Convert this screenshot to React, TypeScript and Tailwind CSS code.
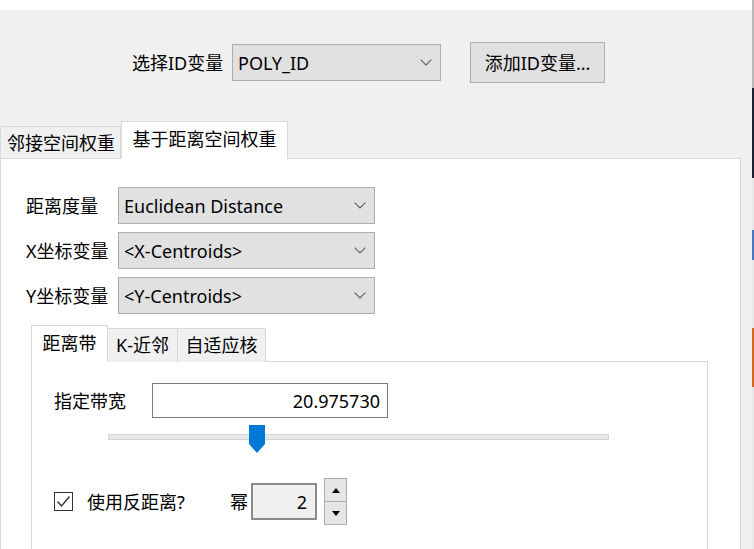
import React from "react"

const Chevron = () => (
  <svg width="12" height="7" viewBox="0 0 12 7" className="shrink-0">
    <polyline points="0.6,0.6 6,6 11.4,0.6" fill="none" stroke="#606060" strokeWidth="1.1" />
  </svg>
)

const ComboBox = ({ value, className }: { value: string; className: string }) => (
  <div
    className={`flex h-[37px] items-center justify-between border border-[#adadad] bg-[#e1e1e1] pl-[5px] pr-[8px] ${className}`}
  >
    <span className="leading-none">{value}</span>
    <Chevron />
  </div>
)

const FieldRow = ({ label, value }: { label: string; value: string }) => (
  <div className="flex h-[37px] items-center">
    <span className="w-[92px] leading-none">{label}</span>
    <ComboBox value={value} className="w-[257px]" />
  </div>
)

const SliderThumb = () => (
  <svg width="18" height="28" viewBox="0 0 18 28">
    <polygon points="1,0 17,0 17,19 9,28 1,19" fill="#0078d7" />
  </svg>
)

const App = () => {
  return (
    <div className="flex h-[549px] w-[754px] overflow-hidden bg-[#f0f0f0] font-['Noto_Sans','Noto_Sans_CJK_SC',sans-serif] text-[18px] text-black">
      {/* dialog */}
      <div className="flex w-[752px] flex-col">
        <div className="h-[10px] bg-white" />

        {/* id variable row */}
        <div className="flex items-center pl-[132px] pt-[32px]">
          <span className="w-[100px] leading-none">选择ID变量</span>
          <ComboBox value="POLY_ID" className="w-[209px]" />
          <button className="ml-[29px] h-[41px] w-[135px] border border-[#adadad] bg-[#e1e1e1] leading-none">
            添加ID变量...
          </button>
        </div>

        {/* outer tabs */}
        <div className="relative z-10 -mb-px mt-[38px] flex h-[38px] items-end">
          <div className="flex h-[33px] w-[121px] items-center justify-center border border-b-0 border-[#d9d9d9] pl-[1px]">
            邻接空间权重
          </div>
          <div className="flex h-[38px] w-[167px] items-center justify-center border border-b-0 border-[#d9d9d9] bg-white pb-[2px]">
            基于距离空间权重
          </div>
        </div>

        <div className="flex w-[741px] flex-1 flex-col border border-b-0 border-[#d9d9d9] bg-white pl-[25px] pt-[28px]">
          <div className="flex flex-col gap-[8px]">
            <FieldRow label="距离度量" value="Euclidean Distance" />
            <FieldRow label="X坐标变量" value="<X-Centroids>" />
            <FieldRow label="Y坐标变量" value="<Y-Centroids>" />
          </div>

          {/* inner tabs */}
          <div className="ml-[5px] mt-[11px] flex flex-1 flex-col">
            <div className="relative z-10 -mb-px flex h-[37px] items-end">
              <div className="flex h-[37px] w-[77px] items-center justify-center border border-b-0 border-[#d9d9d9] bg-white pb-[2px]">
                距离带
              </div>
              <div className="flex h-[34px] w-[70px] items-center justify-center border border-b-0 border-l-0 border-[#d9d9d9] bg-[#f0f0f0]">
                K-近邻
              </div>
              <div className="flex h-[34px] w-[88px] items-center justify-center border border-b-0 border-l-0 border-[#d9d9d9] bg-[#f0f0f0]">
                自适应核
              </div>
            </div>

            <div className="flex w-[677px] flex-1 flex-col border border-b-0 border-[#d9d9d9] pl-[22px] pt-[21px]">
              <div className="flex items-center">
                <span className="w-[98px] leading-none">指定带宽</span>
                <div className="flex h-[35px] w-[236px] items-center justify-end border border-[#7a7a7a] pr-[7px] leading-none">
                  20.975730
                </div>
              </div>

              <div className="relative ml-[54px] mt-[7px] h-[28px] w-[501px]">
                <div className="absolute left-0 right-0 top-[9px] h-[6px] border border-[#d6d6d6] bg-[#e7eaea]" />
                <div className="absolute left-[140px] top-0">
                  <SliderThumb />
                </div>
              </div>

              <div className="mt-[25px] flex h-[47px] items-center">
                <div className="flex h-[19px] w-[19px] items-center justify-center border-[1.5px] border-[#333]">
                  <svg width="15" height="13" viewBox="0 0 15 13">
                    <polyline points="1.5,6.5 5.5,11 13.5,1.5" fill="none" stroke="#333" strokeWidth="1.4" />
                  </svg>
                </div>
                <span className="ml-[14px] w-[143px] leading-none">使用反距离?</span>
                <span className="w-[21px] leading-none">幂</span>
                <div className="flex h-[37px] w-[66px] items-center justify-end border-2 border-[#8a8a8a] bg-[#f0f0f0] pr-[8px] leading-none">
                  2
                </div>
                <div className="ml-[7px] flex h-[47px] w-[23px] flex-col">
                  <div className="flex flex-1 items-center justify-center border border-[#adadad] bg-[#e5e5e5]">
                    <svg width="8" height="5" viewBox="0 0 8 5">
                      <polygon points="0,5 8,5 4,0" fill="#000" />
                    </svg>
                  </div>
                  <div className="flex flex-1 items-center justify-center border border-t-0 border-[#adadad] bg-[#e5e5e5]">
                    <svg width="8" height="5" viewBox="0 0 8 5">
                      <polygon points="0,0 8,0 4,5" fill="#000" />
                    </svg>
                  </div>
                </div>
              </div>
            </div>
          </div>
        </div>
      </div>

      {/* neighbouring window edge */}
      <div className="flex w-[2px] flex-col">
        <div className="h-[88px] bg-[#b8b8b8]" />
        <div className="h-[90px] bg-[#1b2035]" />
        <div className="h-[52px] bg-[#e8e8e8]" />
        <div className="h-[30px] bg-[#4a78c0]" />
        <div className="h-[68px] bg-[#e8e8e8]" />
        <div className="h-[59px] bg-[#d4691c]" />
        <div className="flex-1 bg-[#e8e8e8]" />
      </div>
    </div>
  )
}

export default App
